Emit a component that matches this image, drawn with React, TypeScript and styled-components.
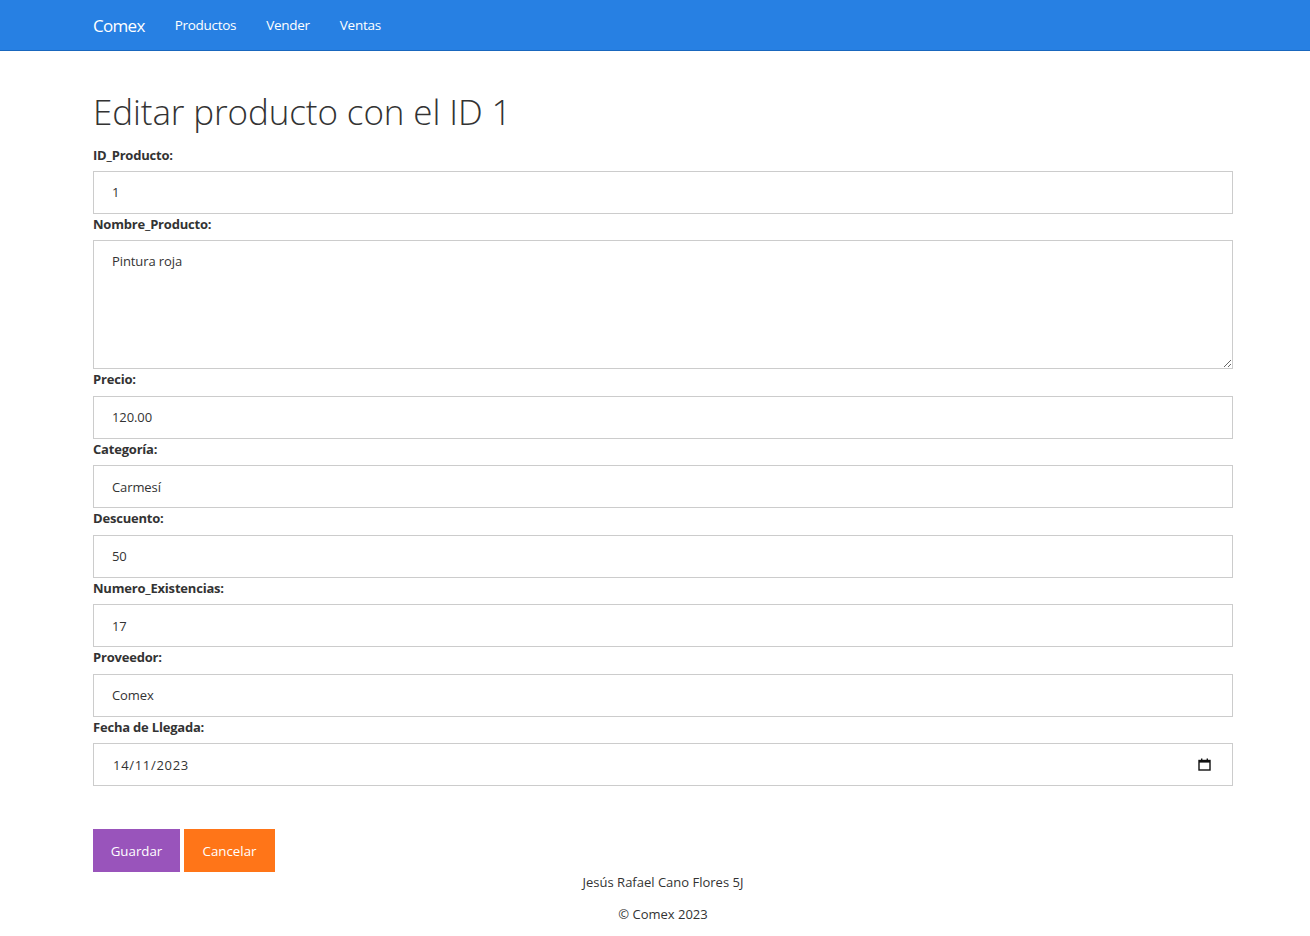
import React from "react";
import styled, { createGlobalStyle } from "styled-components";

const Global = createGlobalStyle`
  html, body { margin: 0; padding: 0; background: #fff; }
  body { font-family: "Open Sans", "Noto Sans", sans-serif; color: #333; }
  * { box-sizing: border-box; }
`;

const NavBar = styled.nav`
  height: 51px;
  background: #2780e3;
  border-bottom: 1px solid #1967be;
  display: flex;
  align-items: center;
  padding-left: 93px;
`;

const Brand = styled.a`
  color: #fff;
  font-size: 17px;
  margin-right: 30px;
  text-decoration: none;
  letter-spacing: -0.7px;
`;

const NavLink = styled.a`
  color: #fff;
  font-size: 13.5px;
  margin-right: 30px;
  text-decoration: none;
  letter-spacing: -0.28px;
`;

const Container = styled.main`
  padding: 0 77px 0 93px;
`;

const Title = styled.h1`
  font-size: 35px;
  font-weight: 300;
  margin: 38.5px 0 11px;
  line-height: 44px;
  letter-spacing: -0.1px;
  color: #333;
`;

const Group = styled.div`
  display: flex;
  flex-direction: column;
`;

const Label = styled.label`
  font-size: 13px;
  font-weight: 700;
  line-height: 21.43px;
  margin-bottom: 5px;
  letter-spacing: -0.2px;
`;

const Input = styled.input`
  height: 43px;
  width: 100%;
  border: 1px solid #ccc;
  padding: 0 18px;
  font-family: inherit;
  font-size: 13px;
  color: #333;
  outline: none;
  letter-spacing: -0.1px;
`;

const TextArea = styled.textarea`
  height: 129px;
  width: 100%;
  border: 1px solid #ccc;
  padding: 10px 18px;
  font-family: inherit;
  font-size: 13px;
  line-height: 20px;
  color: #333;
  outline: none;
  letter-spacing: -0.1px;
  resize: vertical;
  display: block;
`;

const DateBox = styled.div`
  height: 43px;
  border: 1px solid #ccc;
  display: flex;
  align-items: center;
  padding: 0 21px 0 19px;
`;

const DateText = styled.input`
  flex: 1;
  border: none;
  outline: none;
  padding: 0;
  font-family: inherit;
  font-size: 13px;
  color: #333;
  letter-spacing: 0.7px;
`;

const Actions = styled.div`
  display: flex;
  gap: 4px;
  margin-top: 43px;
`;

const Button = styled.button<{ $bg: string; $w: number }>`
  height: 43px;
  width: ${(p) => p.$w}px;
  padding: 0;
  border: none;
  background: ${(p) => p.$bg};
  color: #fff;
  font-family: inherit;
  font-size: 13.3px;
  letter-spacing: 0;
`;

const Footer = styled.footer`
  text-align: center;
  font-size: 13px;
  line-height: 20px;
  p { margin: 0 0 12px; }
`;

const CalendarIcon = () => (
  <svg width="13" height="13" viewBox="0 0 13 13" fill="none">
    <rect x="1" y="2.5" width="11" height="9.5" stroke="#111" strokeWidth="1.4" fill="none" />
    <rect x="1" y="2" width="11" height="2.6" fill="#111" />
    <rect x="3" y="0.5" width="1.4" height="2" fill="#111" />
    <rect x="8.6" y="0.5" width="1.4" height="2" fill="#111" />
  </svg>
);

const fields: { label: string; value: string }[] = [
  { label: "Precio:", value: "120.00" },
  { label: "Categoría:", value: "Carmesí" },
  { label: "Descuento:", value: "50" },
  { label: "Numero_Existencias:", value: "17" },
  { label: "Proveedor:", value: "Comex" },
];

export default function App() {
  return (
    <>
      <Global />
      <NavBar>
        <Brand href="#">Comex</Brand>
        <NavLink href="#">Productos</NavLink>
        <NavLink href="#">Vender</NavLink>
        <NavLink href="#">Ventas</NavLink>
      </NavBar>
      <Container>
        <Title>Editar producto con el ID 1</Title>
        <Group>
          <Label>ID_Producto:</Label>
          <Input defaultValue="1" />
        </Group>
        <Group>
          <Label>Nombre_Producto:</Label>
          <TextArea defaultValue="Pintura roja" />
        </Group>
        {fields.map((f) => (
          <Group key={f.label}>
            <Label>{f.label}</Label>
            <Input defaultValue={f.value} />
          </Group>
        ))}
        <Group>
          <Label>Fecha de Llegada:</Label>
          <DateBox>
            <DateText defaultValue="14/11/2023" />
            <CalendarIcon />
          </DateBox>
        </Group>
        <Actions>
          <Button $bg="#9954bb" $w={87}>Guardar</Button>
          <Button $bg="#ff7518" $w={91}>Cancelar</Button>
        </Actions>
        <Footer>
          <p>Jesús Rafael Cano Flores 5J</p>
          <p>© Comex 2023</p>
        </Footer>
      </Container>
    </>
  );
}
